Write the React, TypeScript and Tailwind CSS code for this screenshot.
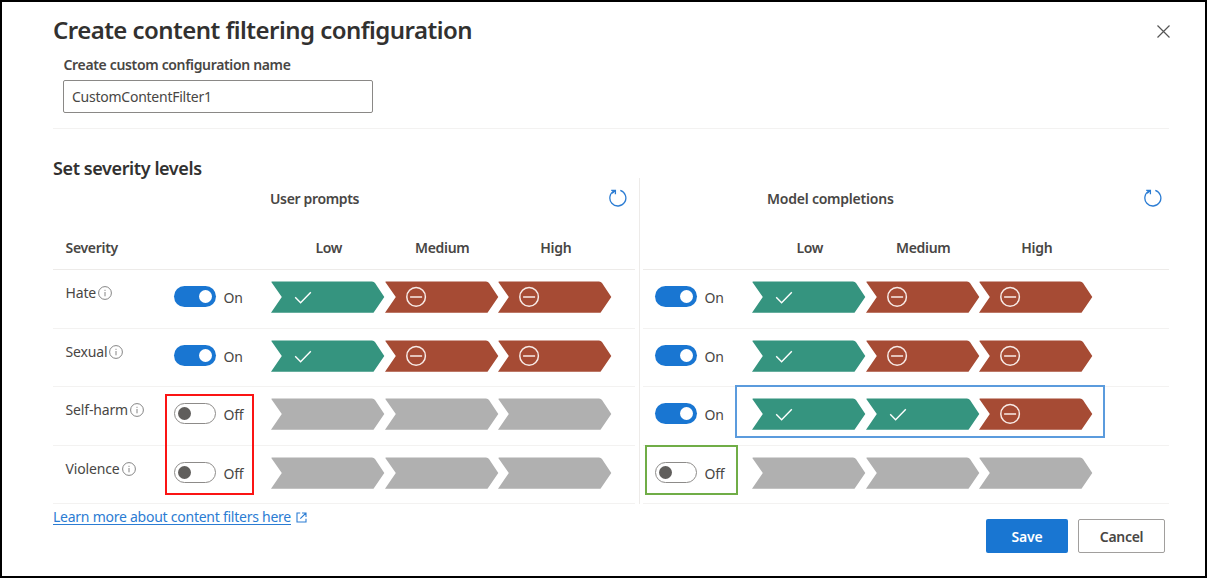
import React from "react";

type Level = "allow" | "block" | "none";

const FILL: Record<Level, string> = { allow: "#35947f", block: "#a64b34", none: "#b0b0b0" };

function Chevron({ level }: { level: Level }) {
  return (
    <svg className="block h-8 w-[113.5px] shrink-0 overflow-visible" viewBox="0 0 113.5 32" fill="none">
      <path
        d="M1 0.5H101Q103 0.5 104 2L113.3 16L102.5 31.7H0L10.8 16L0.3 1Q0.2 .5 1 .5Z"
        fill={FILL[level]}
      />
      {level === "allow" && <path d="M24.2 16.3L29.6 21.7L39.8 11.2" stroke="#fff" strokeWidth="1.4" />}
      {level === "block" && (
        <g stroke="#f8ebe7" strokeWidth="1.5">
          <circle cx="31.1" cy="15.9" r="9.3" />
          <path d="M25.1 16H37.1" />
        </g>
      )}
    </svg>
  );
}

function Toggle({ on }: { on: boolean }) {
  return on ? (
    <span className="flex h-[21px] w-[42px] shrink-0 items-center justify-end rounded-full bg-[#1976d2] pr-[4px]">
      <span className="h-[13px] w-[13px] rounded-full bg-white" />
    </span>
  ) : (
    <span className="flex h-[21px] w-[42px] shrink-0 items-center rounded-full border border-[#8d8b89] bg-white pl-[3px]">
      <span className="h-[13px] w-[13px] rounded-full bg-[#605e5c]" />
    </span>
  );
}

function Info() {
  return (
    <svg className="block h-[14px] w-[14px] shrink-0" viewBox="0 0 14 14" fill="none" stroke="#777" strokeWidth="0.9">
      <circle cx="7" cy="7" r="6.4" />
      <path d="M7 6V10.3M7 3.8V4.9" />
    </svg>
  );
}

function Refresh() {
  return (
    <svg className="block h-[18px] w-[18px]" viewBox="0 0 18 18" fill="none" stroke="#2b7cd3" strokeWidth="1.3">
      <path d="M11.3 1.4A8 8 0 1 1 5.4 1.8" />
      <path d="M2.2 1.3H6.4V5.2M6.2 1.5L3.2 4.4" />
    </svg>
  );
}

type RowData = { label?: string; on: boolean; levels: Level[] };

const PROMPTS: RowData[] = [
  { label: "Hate", on: true, levels: ["allow", "block", "block"] },
  { label: "Sexual", on: true, levels: ["allow", "block", "block"] },
  { label: "Self-harm", on: false, levels: ["none", "none", "none"] },
  { label: "Violence", on: false, levels: ["none", "none", "none"] },
];

const COMPLETIONS: RowData[] = [
  { on: true, levels: ["allow", "block", "block"] },
  { on: true, levels: ["allow", "block", "block"] },
  { on: true, levels: ["allow", "allow", "block"] },
  { on: false, levels: ["none", "none", "none"] },
];

function Row({ row }: { row: RowData }) {
  return (
    <div className="flex h-[58.5px] border-b border-[#f3f2f1]">
      {row.label && (
        <div className="flex h-[46.5px] w-[109px] shrink-0 items-center gap-[2px] pl-[12.5px]">
          <span className="tracking-[-0.15px]">{row.label}</span>
          <Info />
        </div>
      )}
      <div className="flex h-[53.5px] w-[109px] shrink-0 items-center pl-3">
        <Toggle on={row.on} />
        <span className="pt-[2.5px] pl-[7.5px] tracking-[-0.2px]">{row.on ? "On" : "Off"}</span>
      </div>
      <div className="flex h-[54px] items-center">
        {row.levels.map((level, i) => (
          <Chevron key={i} level={level} />
        ))}
      </div>
    </div>
  );
}

function ColumnHeads() {
  return (
    <div className="flex pl-px text-center font-semibold tracking-[-0.3px]">
      {["Low", "Medium", "High"].map((name) => (
        <span key={name} className="w-[113.5px]">{name}</span>
      ))}
    </div>
  );
}

export default function App() {
  return (
    <div className="relative flex h-[578px] w-[1207px] flex-col overflow-hidden border-2 border-black bg-white pr-9 pl-[51px] font-['Noto_Sans','Open_Sans',sans-serif] text-[14px] leading-5 text-[#484644]">
      <header className="flex h-[52px] shrink-0 items-start justify-between pt-[12px]">
        <h1 className="text-[24px] leading-8 font-semibold tracking-[-0.54px] text-[#323130]">Create content filtering configuration</h1>
        <svg className="mt-[11px] -mr-px h-[13px] w-[13px]" viewBox="0 0 13 13" stroke="#555" strokeWidth="1.2">
          <path d="M0.5 .5L12.5 12.5M12.5 .5L.5 12.5" />
        </svg>
      </header>
      <section className="h-[75px] shrink-0 border-b border-[#f3f2f1] pl-[10px]">
        <label className="block pt-px pl-[0.5px] font-semibold tracking-[-0.34px]">Create custom configuration name</label>
        <div className="mt-[5px] flex h-[33px] w-[310px] items-center rounded-[2px] border border-[#8a8886] pl-2 tracking-[-0.25px]">
          CustomContentFilter1
        </div>
      </section>
      <h2 className="h-[49px] shrink-0 pt-[27px] text-[18px] leading-6 font-semibold tracking-[-0.4px] text-[#323130]">Set severity levels</h2>
      <div className="flex h-[326px] shrink-0">
        <div className="w-[582px] shrink-0">
          <div className="flex h-[92px] flex-col border-b border-[#edebe9]">
            <div className="flex h-[60px] items-start justify-between pt-[11px] pr-[8.5px] pl-[217px]">
              <span className="font-semibold tracking-[-0.35px]">User prompts</span>
              <Refresh />
            </div>
            <div className="flex">
              <span className="w-[218px] pl-[12.5px] font-semibold tracking-[-0.3px]">Severity</span>
              <ColumnHeads />
            </div>
          </div>
          {PROMPTS.map((row) => <Row key={row.label} row={row} />)}
        </div>
        <div className="ml-[4px] w-px shrink-0 bg-[#edebe9]" />
        <div className="ml-[3px] w-[526px] shrink-0">
          <div className="flex h-[92px] flex-col border-b border-[#edebe9]">
            <div className="flex h-[60px] items-start justify-between pt-[11px] pr-[7.5px] pl-[124px]">
              <span className="font-semibold tracking-[-0.22px]">Model completions</span>
              <Refresh />
            </div>
            <div className="pl-[109px]"><ColumnHeads /></div>
          </div>
          {COMPLETIONS.map((row, i) => <Row key={i} row={row} />)}
        </div>
      </div>
      <footer className="flex items-start justify-between">
        <a className="mt-[3px] flex items-center gap-[5px] text-[#2b7cd3]">
          <span className="tracking-[-0.25px] underline underline-offset-2">Learn more about content filters here</span>
          <svg className="h-[11px] w-[11px]" viewBox="0 0 11 11" fill="none" stroke="#2b7cd3" strokeWidth="1.1">
            <path d="M4.2 1H1V10H10V6.8M6 1H10V5M10 1L4.3 6.7" />
          </svg>
        </a>
        <div className="mt-[15px] mr-1 flex gap-[10px] font-semibold">
          <button className="h-[34px] w-[82px] rounded-[2px] bg-[#1976d2] pt-px tracking-[-0.2px] text-white">Save</button>
          <button className="h-[34px] w-[87px] rounded-[2px] border border-[#a19f9d] pt-px tracking-[-0.3px]">Cancel</button>
        </div>
      </footer>
      <div className="absolute top-[392px] left-[163px] h-[101px] w-[89px] border-2 border-[#fb1414]" />
      <div className="absolute top-[443px] left-[643px] h-[50px] w-[93px] border-2 border-[#70ad47]" />
      <div className="absolute top-[383px] left-[733px] h-[53px] w-[370px] border-2 border-[#5b9bdd]" />
    </div>
  );
}
